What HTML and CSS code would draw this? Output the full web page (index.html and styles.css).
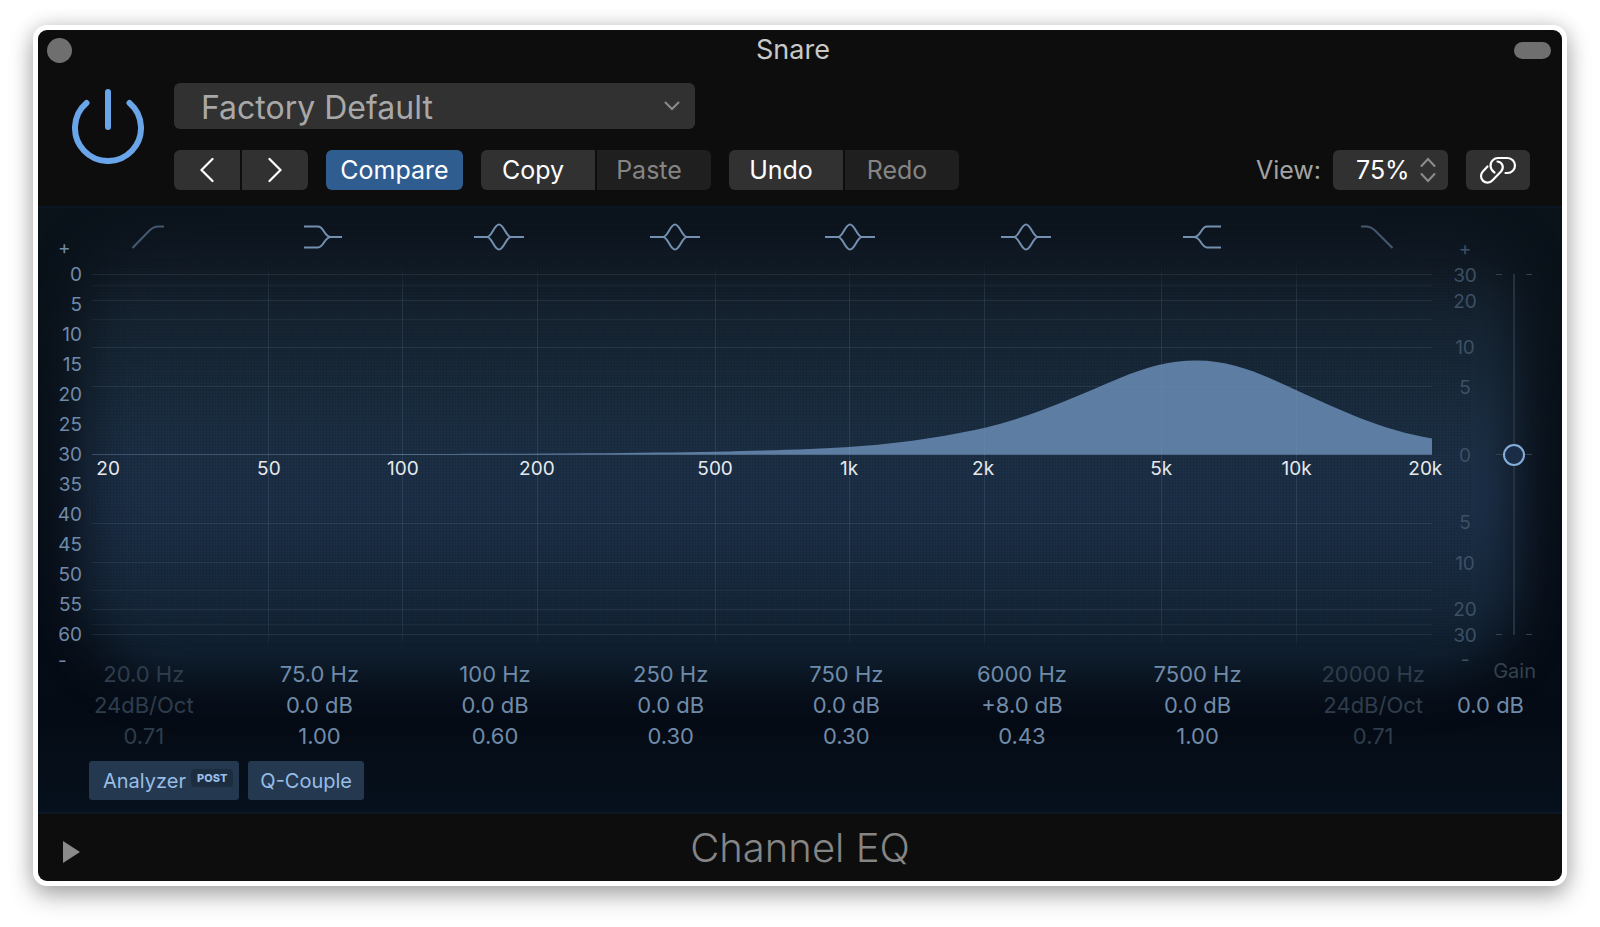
FILE: index.html
```html
<!DOCTYPE html>
<html lang="en">

<head>
  <meta charset="UTF-8">
  <meta name="viewport" content="width=device-width, initial-scale=1.0">
  <title>Channel EQ</title>
  <link rel="stylesheet" href="styles.css">
</head>
<body>
  <div class="plugin-window">
    <header class="title-bar">
      <button class="close-button" type="button" aria-label="Close"></button>
      <h1>Snare</h1>
      <button class="pill-button" type="button" aria-label="Hide header"></button>
    </header>

    <div class="controls">
      <button class="power-button" type="button" aria-label="Power">
        <svg width="72" height="76" viewBox="0 0 72 76" fill="none" stroke="#69a5e8" stroke-width="6" stroke-linecap="round">
          <path d="M14.500 15 A33 33 0 1 0 57.500 15"/>
          <path d="M36 4 V39"/>
        </svg>
      </button>

      <div class="control-rows">
        <div class="preset">
          <select aria-label="Preset">
            <option>Factory Default</option>
          </select>
          <svg class="chevron" width="16" height="10" viewBox="0 0 16 10" fill="none" stroke="#8c8c8c" stroke-width="2" stroke-linecap="round">
            <path d="M1.500 1.500 L8 8 L14.500 1.500"/>
          </svg>
        </div>

        <div class="toolbar">
          <div class="button-group">
            <button class="arrow" type="button" aria-label="Previous preset">
              <svg width="14" height="26" viewBox="0 0 14 26" fill="none" stroke="#fff" stroke-width="2.200" stroke-linecap="round"><path d="M12.500 2 L1.500 13 L12.500 24"/></svg>
            </button>
            <button class="arrow" type="button" aria-label="Next preset">
              <svg width="14" height="26" viewBox="0 0 14 26" fill="none" stroke="#fff" stroke-width="2.200" stroke-linecap="round"><path d="M1.500 2 L12.500 13 L1.500 24"/></svg>
            </button>
          </div>
          <button class="compare" type="button">Compare</button>
          <div class="button-group labelled">
            <button type="button">Copy</button>
            <button type="button" disabled>Paste</button>
          </div>
          <div class="button-group labelled">
            <button type="button">Undo</button>
            <button type="button" disabled>Redo</button>
          </div>

          <div class="view-controls">
            <label for="view-size">View:</label>
            <div class="view-select">
              <select id="view-size">
                <option>75%</option>
              </select>
              <svg class="chevron" width="16" height="26" viewBox="0 0 16 26" fill="none" stroke="#8c8c8c" stroke-width="2" stroke-linecap="round">
                <path d="M1.500 9 L8 2 L14.500 9 M1.500 17 L8 24 L14.500 17"/>
              </svg>
            </div>
            <button class="link-button" type="button" aria-label="Link">
              <svg width="38" height="28" viewBox="0 0 38 28" fill="none" stroke="#fff" stroke-width="2.200" stroke-linecap="round">
                <path d="M8.500 10.500 L3.800 15.600 A6.500 6.500 0 0 0 13.300 24.600 L22 15.500 C25.500 11.500 23.500 6 18.500 5.500"/>
                <path d="M15.500 16.500 C10.500 13.500 10.500 7 14 4 C15.500 2.500 17 2 19 2 H28.500 A7.500 7.500 0 0 1 28.500 17 H26.500"/>
              </svg>
            </button>
          </div>
        </div>
      </div>
    </div>

    <main class="screen">
      <div class="band-icons">
        <button class="off" type="button" aria-label="Low cut">
          <svg width="32" height="26" viewBox="0 0 32 26"><path d="M0.500 24 L17 7 Q21.500 2.500 26 2.500 H32"/></svg>
        </button>
        <button type="button" aria-label="Low shelf">
          <svg width="38" height="26" viewBox="0 0 38 26"><path d="M0 2.500 H14 C20 2.500 20 13 27 13 H38 M0 23.500 H14 C20 23.500 20 13 27 13"/></svg>
        </button>
        <button type="button" aria-label="Band 1">
          <svg width="50" height="28" viewBox="0 0 50 28"><path d="M0 14 H13 C18 14 20 1.500 25 1.500 S32 14 37 14 H50 M13 14 C18 14 20 26.500 25 26.500 S32 14 37 14"/></svg>
        </button>
        <button type="button" aria-label="Band 2">
          <svg width="50" height="28" viewBox="0 0 50 28"><path d="M0 14 H13 C18 14 20 1.500 25 1.500 S32 14 37 14 H50 M13 14 C18 14 20 26.500 25 26.500 S32 14 37 14"/></svg>
        </button>
        <button type="button" aria-label="Band 3">
          <svg width="50" height="28" viewBox="0 0 50 28"><path d="M0 14 H13 C18 14 20 1.500 25 1.500 S32 14 37 14 H50 M13 14 C18 14 20 26.500 25 26.500 S32 14 37 14"/></svg>
        </button>
        <button type="button" aria-label="Band 4">
          <svg width="50" height="28" viewBox="0 0 50 28"><path d="M0 14 H13 C18 14 20 1.500 25 1.500 S32 14 37 14 H50 M13 14 C18 14 20 26.500 25 26.500 S32 14 37 14"/></svg>
        </button>
        <button type="button" aria-label="High shelf">
          <svg width="38" height="26" viewBox="0 0 38 26"><path d="M38 2.500 H24 C18 2.500 18 13 11 13 H0 M38 23.500 H24 C18 23.500 18 13 11 13"/></svg>
        </button>
        <button class="off" type="button" aria-label="High cut">
          <svg width="32" height="26" viewBox="0 0 32 26"><path d="M0 2.500 H5 Q10 2.500 14.500 7 L31.500 24"/></svg>
        </button>
      </div>

      <div class="graph">
        <div class="level-scale">
          <span class="sign">+</span>
          <span>0</span>
          <span>5</span>
          <span>10</span>
          <span>15</span>
          <span>20</span>
          <span>25</span>
          <span>30</span>
          <span>35</span>
          <span>40</span>
          <span>45</span>
          <span>50</span>
          <span>55</span>
          <span>60</span>
          <span class="sign">-</span>
        </div>

        <div class="plot">
          <svg class="plot-area" viewBox="0 0 1340 380" preserveAspectRatio="none">
            <defs>
              <linearGradient id="line-fade" gradientUnits="userSpaceOnUse" x1="0" y1="0" x2="0" y2="380">
                <stop offset="0" stop-color="#7a9bb0" stop-opacity="0"/>
                <stop offset="0.080" stop-color="#7a9bb0" stop-opacity="0.160"/>
                <stop offset="0.940" stop-color="#7a9bb0" stop-opacity="0.160"/>
                <stop offset="1" stop-color="#7a9bb0" stop-opacity="0.040"/>
              </linearGradient>
            </defs>
            <path class="response" d="M300 190 C560 190 680 187.500 757 183 C810 179.500 850 173 892 164 C945 151 985 132 1028 114 C1055 103 1075 96.500 1105 96.500 C1140 96.500 1170 110 1204 126 C1250 147 1290 166 1340 174.500 V190.500 H300 Z"/>
            <path class="grid-line major" d="M0 10.500 H1340 M0 36.500 H1340 M0 83.500 H1340 M0 122.500 H1340 M0 259.500 H1340 M0 298.500 H1340 M0 345.500 H1340 M0 370.500 H1340"/>
            <path class="grid-line minor" d="M0 21.500 H1340 M0 55.500 H1340 M0 326.500 H1340 M0 360.500 H1340"/>
            <path class="zero-line" d="M0 190.500 H1340"/>
            <path class="freq-line" d="M176.500 0 V380 M310.500 0 V380 M445.500 0 V380 M623.500 0 V380 M757.500 0 V380 M892.500 0 V380 M1069.500 0 V380 M1204.500 0 V380"/>
          </svg>
          <div class="freq-scale">
            <span style="left: 1.2%">20</span>
            <span style="left: 13.2%">50</span>
            <span style="left: 23.2%">100</span>
            <span style="left: 33.2%">200</span>
            <span style="left: 46.5%">500</span>
            <span style="left: 56.5%">1k</span>
            <span style="left: 66.5%">2k</span>
            <span style="left: 79.8%">5k</span>
            <span style="left: 89.9%">10k</span>
            <span style="left: 99.5%">20k</span>
          </div>
        </div>

        <div class="gain-scale">
          <span>+</span>
          <span>30</span>
          <span>20</span>
          <span>10</span>
          <span>5</span>
          <span>0</span>
          <span>5</span>
          <span>10</span>
          <span>20</span>
          <span>30</span>
          <span>-</span>
        </div>

        <div class="gain-slider">
          <input id="gain" type="range" min="-30" max="30" value="0">
        </div>
      </div>

      <div class="band-values">
        <div class="band off">
          <span>20.0 Hz</span>
          <span>24dB/Oct</span>
          <span>0.71</span>
        </div>
        <div class="band">
          <span>75.0 Hz</span>
          <span>0.0 dB</span>
          <span>1.00</span>
        </div>
        <div class="band">
          <span>100 Hz</span>
          <span>0.0 dB</span>
          <span>0.60</span>
        </div>
        <div class="band">
          <span>250 Hz</span>
          <span>0.0 dB</span>
          <span>0.30</span>
        </div>
        <div class="band">
          <span>750 Hz</span>
          <span>0.0 dB</span>
          <span>0.30</span>
        </div>
        <div class="band">
          <span>6000 Hz</span>
          <span>+8.0 dB</span>
          <span>0.43</span>
        </div>
        <div class="band">
          <span>7500 Hz</span>
          <span>0.0 dB</span>
          <span>1.00</span>
        </div>
        <div class="band off">
          <span>20000 Hz</span>
          <span>24dB/Oct</span>
          <span>0.71</span>
        </div>
        <div class="gain-value">
          <label for="gain">Gain</label>
          <span>0.0 dB</span>
        </div>
      </div>

      <div class="screen-buttons">
        <button class="analyzer" type="button">Analyzer <span class="post">POST</span></button>
        <button type="button">Q-Couple</button>
      </div>
    </main>

    <footer class="plugin-footer">
      <button class="disclosure" type="button" aria-label="Show extended parameters">
        <svg width="17" height="22" viewBox="0 0 17 22"><path d="M0 0 L17 11 L0 22 Z" fill="#8a8a8a"/></svg>
      </button>
      <h2>Channel EQ</h2>
    </footer>
  </div>
</body>
</html>
```

FILE: styles.css
```css
/* Global Styles */
* {
  box-sizing: border-box;
}

body {
  margin: 0;
  padding: 25px 33px 41px;
  background-color: #fff;
  font-family: Inter, "Liberation Sans", sans-serif;
}

button,
select,
input {
  margin: 0;
  padding: 0;
  border: none;
  background: none;
  color: inherit;
  font: inherit;
  appearance: none;
}

svg {
  display: block;
}

.plugin-window {
  border: 5px solid #fff;
  border-radius: 14px;
  background-color: #fff;
  box-shadow: 0 10px 24px rgba(0, 0, 0, 0.3), 0 0 20px rgba(0, 0, 0, 0.14);
}

/* Title Bar */
.title-bar {
  display: flex;
  justify-content: space-between;
  align-items: center;
  height: 40px;
  padding: 0 11px 0 9px;
  border-radius: 9px 9px 0 0;
  background-color: #0d0d0d;
}

.title-bar h1 {
  margin: 0;
  color: #c8c8c8;
  font-size: 27px;
  font-weight: 400;
  line-height: 40px;
}

.close-button {
  width: 25px;
  height: 25px;
  border-radius: 50%;
  background-color: #6f6f6f;
}

.pill-button {
  width: 37px;
  height: 17px;
  border-radius: 9px;
  background-color: #6f6f6f;
}

/* Preset and Toolbar */
.controls {
  display: flex;
  gap: 30px;
  padding: 13px 32px 16px 34px;
  background-color: #0d0d0d;
}

.power-button {
  align-self: flex-start;
  margin-top: 5px;
}

.control-rows {
  flex: 1;
  display: flex;
  flex-direction: column;
  gap: 21px;
}

.preset,
.view-select {
  position: relative;
}

.preset {
  width: 521px;
}

.preset select {
  display: block;
  width: 100%;
  height: 46px;
  padding: 2px 0 0 27px;
  border-radius: 6px;
  background-color: #313131;
  color: #a8a8a8;
  font-size: 32px;
}

.chevron {
  position: absolute;
  top: 50%;
  right: 15px;
  transform: translateY(-50%);
  pointer-events: none;
}

.toolbar {
  display: flex;
  gap: 18px;
  height: 40px;
  font-size: 25px;
}

.toolbar button {
  background-color: #313131;
  color: #fff;
}

.button-group {
  display: flex;
  gap: 2px;
}

.button-group button:first-child {
  border-radius: 6px 0 0 6px;
}

.button-group button:last-child {
  border-radius: 0 6px 6px 0;
}

.button-group .arrow {
  display: flex;
  justify-content: center;
  align-items: center;
  width: 66px;
}

.labelled button {
  width: 114px;
  padding-right: 10px;
}

.toolbar button:disabled {
  background-color: #1f1f1f;
  color: #858585;
}

.toolbar .compare {
  width: 137px;
  border-radius: 6px;
  background-color: #2f5d8f;
}

.view-controls {
  display: flex;
  align-items: center;
  margin-left: auto;
  color: #a3a3a3;
}

.view-select {
  margin: 0 18px 0 12px;
}

.view-select select {
  display: block;
  width: 115px;
  height: 40px;
  padding-left: 23px;
  border-radius: 6px;
  background-color: #313131;
  color: #fff;
}

.view-select .chevron {
  right: 12px;
}

.link-button {
  display: flex;
  justify-content: center;
  align-items: center;
  width: 64px;
  height: 40px;
  border-radius: 6px;
}

/* EQ Screen */
.screen {
  position: relative;
  z-index: 0;
  overflow: hidden;
  padding: 14px 0 12px;
  border: 2px solid #0c1723;
  border-width: 2px 0;
  background: linear-gradient(#0a121a 0%, #070d16 60%, #050b15 85%, #06111d 100%);
  color: #708ba9;
}

/* soft light behind the graph */
.screen::before {
  content: "";
  position: absolute;
  z-index: -2;
  inset: 18px 44px 134px;
  border-radius: 90px;
  background: linear-gradient(#0c131c 0%, #14212e 16%, #1a2d40 42%, #1d3049 60%, #17293d 80%, #0d1c2b 100%);
  filter: blur(24px);
}

/* fine dot mesh */
.screen::after {
  content: "";
  position: absolute;
  z-index: -1;
  inset: 50px 90px 164px 54px;
  background:
    repeating-linear-gradient(90deg, rgba(0, 0, 0, 0.07) 0 1px, transparent 1px 3px),
    repeating-linear-gradient(rgba(0, 0, 0, 0.07) 0 1px, transparent 1px 3px);
}

.band-icons {
  display: grid;
  grid-template-columns: repeat(8, 1fr);
  height: 30px;
  padding: 0 97px 0 22px;
}

.band-icons button {
  display: flex;
  justify-content: center;
  align-items: center;
}

.band-icons path {
  fill: none;
  stroke: #7390b0;
  stroke-width: 2;
}

.band-icons .off {
  opacity: 0.55;
}

.graph {
  display: grid;
  grid-template-columns: 44px 1fr 64px 36px;
  margin: -17px 30px -13px 0;
  font-size: 19px;
}

.level-scale {
  display: grid;
  grid-template-rows: 24px repeat(13, 30px) 22px;
  align-items: center;
  justify-items: end;
}

.level-scale .sign {
  justify-self: start;
  padding-left: 20px;
}

.plot {
  position: relative;
  margin-left: 10px;
  padding-top: 29px;
}

.plot-area {
  width: 100%;
  height: 380px;
}

.plot-area path {
  fill: none;
  vector-effect: non-scaling-stroke;
}

.plot-area .response {
  fill: #5d7da3;
}

.grid-line {
  stroke: #7a9bb0;
  stroke-opacity: 0.14;
}

.grid-line.minor {
  stroke-opacity: 0.09;
}

.zero-line {
  stroke: #6f8cad;
  stroke-opacity: 0.4;
}

.freq-line {
  stroke: url(#line-fade);
}

.freq-scale span {
  position: absolute;
  top: 233px;
  transform: translate(-50%, -50%);
  color: #e6e9ec;
}

.gain-scale {
  display: grid;
  grid-template-rows: 27px 26px 26px 66px 15px 120px 15px 66px 26px 26px 23px;
  align-items: center;
  justify-items: center;
  padding-left: 2px;
  line-height: 15px;
  color: #3d5064;
}

.gain-slider {
  height: 361px;
  margin-top: 39px;
  background:
    linear-gradient(#304150, #304150) 0 0 / 6px 1px,
    linear-gradient(#304150, #304150) 100% 0 / 6px 1px,
    linear-gradient(#304150, #304150) 0 50% / 36px 1px,
    linear-gradient(#304150, #304150) 0 100% / 6px 1px,
    linear-gradient(#304150, #304150) 100% 100% / 6px 1px,
    linear-gradient(#24323f, #24323f) 50% 0 / 2px 100%;
  background-repeat: no-repeat;
}

.gain-slider input {
  display: block;
  width: 36px;
  height: 361px;
  writing-mode: vertical-lr;
  direction: rtl;
}

.gain-slider input::-webkit-slider-thumb {
  width: 22px;
  height: 22px;
  border: 2px solid #86aedb;
  border-radius: 50%;
  background-color: #1a2c46;
  appearance: none;
}

/* Band Values */
.band-values {
  display: grid;
  grid-template-columns: repeat(8, 1fr) 75px;
  padding: 1px 26px 0 18px;
  font-size: 22px;
  line-height: 31px;
}

.band,
.gain-value {
  display: flex;
  flex-direction: column;
  align-items: center;
}

.band.off {
  color: #2e3d4c;
}

.gain-value {
  align-items: flex-end;
}

.gain-value label {
  color: #33424f;
  font-size: 20px;
  line-height: 24px;
}

.gain-value span {
  padding: 7px 12px 0 0;
  white-space: nowrap;
}

.screen-buttons {
  display: flex;
  gap: 9px;
  margin-top: 9px;
  padding-left: 51px;
  font-size: 20px;
}

.screen-buttons button {
  height: 39px;
  padding: 0 12px;
  border-radius: 3px;
  background-color: #24384f;
  color: #98bde6;
}

.screen-buttons .analyzer {
  display: flex;
  align-items: center;
  gap: 5px;
  padding: 0 6px 0 14px;
}

.post {
  margin-bottom: 6px;
  padding: 0 6px;
  border-radius: 4px;
  background-color: #1c2d40;
  font-size: 11px;
  font-weight: 800;
  line-height: 18px;
}

/* Footer */
.plugin-footer {
  display: grid;
  grid-template-columns: 1fr auto 1fr;
  align-items: center;
  height: 67px;
  padding: 0 25px;
  border-radius: 0 0 9px 9px;
  background-color: #0d0d0d;
}

.plugin-footer h2 {
  margin: 0;
  color: #858585;
  font-size: 40px;
  font-weight: 300;
  line-height: 50px;
}

.disclosure {
  justify-self: start;
  padding-top: 8px;
}
```
